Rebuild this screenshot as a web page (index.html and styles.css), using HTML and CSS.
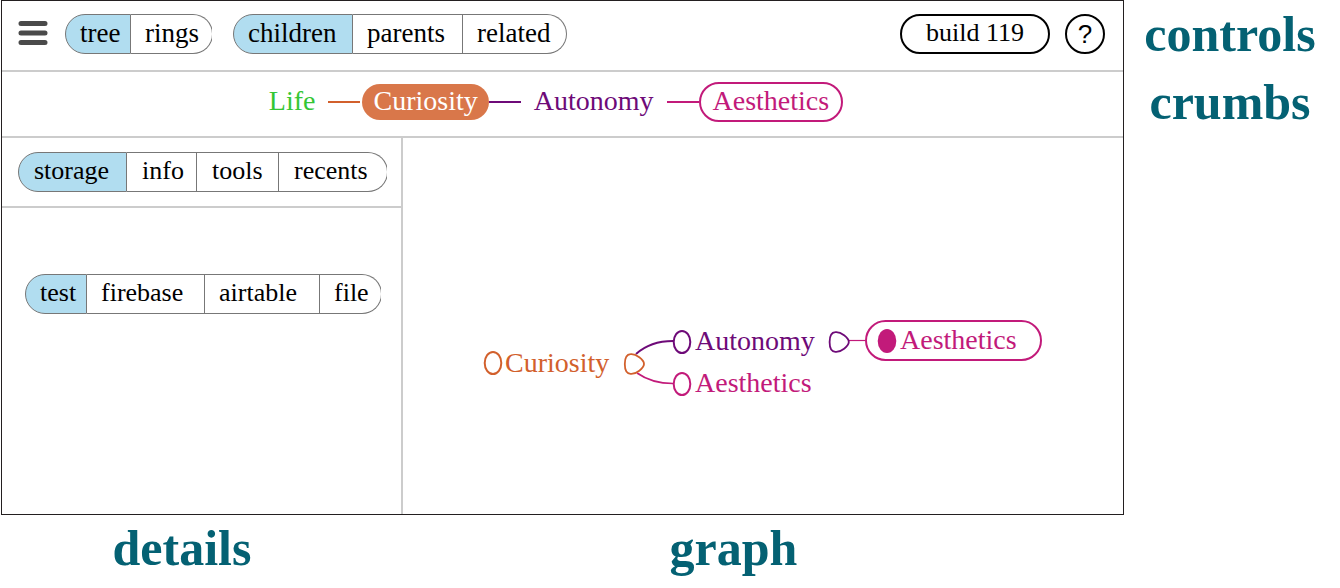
FILE: index.html
```
<!DOCTYPE html>
<html lang="en">
<head>
<meta charset="utf-8">
<title>Layout regions</title>
<link rel="stylesheet" href="styles.css">
</head>
<body>
<div class="page">
  <main class="frame">
    <header class="controls">
      <button class="menu" aria-label="Menu">
        <svg width="30" height="26" viewBox="0 0 30 26" stroke="#4a4a4a" stroke-width="5" stroke-linecap="round"><path d="M3 2.500H27M3 12H27M3 21.500H27"/></svg>
      </button>
      <div class="segments segments-view clipped" role="group" aria-label="View">
        <button class="segment selected" aria-pressed="true">tree</button>
        <button class="segment" aria-pressed="false">rings</button>
      </div>
      <div class="segments segments-relation" role="group" aria-label="Relation">
        <button class="segment selected" aria-pressed="true">children</button>
        <button class="segment" aria-pressed="false">parents</button>
        <button class="segment" aria-pressed="false">related</button>
      </div>
      <div class="actions">
        <button class="build">build 119</button>
        <button class="help" aria-label="Help">?</button>
      </div>
    </header>
    <nav class="crumbs" aria-label="Breadcrumbs">
      <button class="crumb green">Life</button>
      <span class="link orange"></span>
      <button class="crumb crumb-filled">Curiosity</button>
      <span class="link link-joined purple"></span>
      <button class="crumb purple">Autonomy</button>
      <span class="link pink"></span>
      <button class="crumb crumb-outlined pink">Aesthetics</button>
    </nav>
    <div class="body">
      <aside class="details">
        <div class="details-tabs">
          <div class="segments segments-details clipped" role="group" aria-label="Details">
            <button class="segment selected" aria-pressed="true">storage</button>
            <button class="segment" aria-pressed="false">info</button>
            <button class="segment" aria-pressed="false">tools</button>
            <button class="segment" aria-pressed="false">recents</button>
          </div>
        </div>
        <div class="details-content">
          <div class="segments segments-storage clipped" role="group" aria-label="Storage">
            <button class="segment selected" aria-pressed="true">test</button>
            <button class="segment" aria-pressed="false">firebase</button>
            <button class="segment" aria-pressed="false">airtable</button>
            <button class="segment" aria-pressed="false">file</button>
          </div>
        </div>
      </aside>
      <section class="graph" aria-label="Graph">
        <svg class="edges" width="660" height="280" viewBox="0 0 660 280" fill="none" stroke-width="2">
          <path stroke="#6e0a78" d="M233 216C243 207 254 203 270 203"/>
          <path stroke="#c21a7a" stroke-width="1.7" d="M234 235C244 242 256 245.500 270 245.500"/>
          <path stroke="#c21a7a" stroke-width="1.200" d="M446 202.500H462"/>
          <ellipse stroke="#d2602c" cx="90" cy="225" rx="8.300" ry="11"/>
          <path stroke="#d2602c" stroke-width="1.800" d="M227.500 216.200C233 215.500 241 222 241 226C241 230 233 236.500 227.500 235.800C223 235.500 221.800 231 221.800 226C221.800 221 223 216.500 227.500 216.200Z"/>
          <ellipse stroke="#6e0a78" cx="279" cy="204" rx="8.300" ry="11"/>
          <ellipse stroke="#c21a7a" cx="279" cy="246" rx="8.300" ry="11"/>
          <path stroke="#6e0a78" stroke-width="1.800" d="M432.300 194.200C437.800 193.500 445.800 200 445.800 204C445.800 208 437.800 214.500 432.300 213.800C427.800 213.500 426.600 209 426.600 204C426.600 199 427.800 194.500 432.300 194.200Z"/>
          <rect stroke="#c21a7a" x="463" y="183" width="175" height="39" rx="19.500"/>
          <ellipse fill="#c21a7a" cx="484" cy="203" rx="9.300" ry="12"/>
        </svg>
        <button class="node node-curiosity orange">Curiosity</button>
        <button class="node node-autonomy purple">Autonomy</button>
        <button class="node node-aesthetics pink">Aesthetics</button>
        <button class="node node-current pink">Aesthetics</button>
      </section>
    </div>
  </main>
  <div class="side-labels">
    <div>controls</div>
    <div>crumbs</div>
  </div>
  <div class="bottom-labels">
    <div class="label-details">details</div>
    <div class="label-graph">graph</div>
  </div>
</div>
</body>
</html>
```

FILE: styles.css
```
* {
  box-sizing: border-box;
}

body {
  margin: 0;
  background: #fff;
  color: #000;
  font-family: "Liberation Serif", "Times New Roman", serif;
}

button {
  margin: 0;
  padding: 0;
  border: 0;
  background: none;
  color: inherit;
  font: inherit;
  white-space: nowrap;
  cursor: pointer;
}

.page {
  display: grid;
  grid-template-columns: minmax(0, 1fr) 216px;
  grid-template-rows: 1fr auto;
  min-height: 100vh;
  padding-left: 1px;
  padding-bottom: 7px;
}

.frame {
  display: flex;
  flex-direction: column;
  border: 1px solid #231f20;
}

.controls {
  display: flex;
  align-items: center;
  padding: 13px 18px 16px 16px;
  border-bottom: 2px solid #ccc;
  font-size: 27px;
}

.menu {
  display: flex;
  margin-right: 17px;
}

.segments {
  display: grid;
  width: max-content;
  height: 40px;
  line-height: 32px;
}

.segments-view {
  grid-template-columns: 66px 82px;
  margin-right: 20px;
}

.segments-relation {
  grid-template-columns: 120px 110px 104px;
}

.segments-details {
  grid-template-columns: 109px 70px 82px 109px;
}

.segments-storage {
  grid-template-columns: 62px 118px 115px 62px;
}

.clipped {
  clip-path: inset(0 1px 0 0);
}

.segment {
  padding: 0 0 2px 14px;
  border: 1px solid #777;
  border-left-width: 0;
  text-align: left;
}

.segment:first-child {
  border-left-width: 1px;
  border-radius: 20px 0 0 20px;
}

.segment:last-child {
  border-radius: 0 20px 20px 0;
}

.segments-details .segment {
  padding-left: 15px;
}

.selected {
  background: #b1ddf0;
}

.actions {
  display: flex;
  gap: 15px;
  margin-left: auto;
  font-size: 26px;
}

.build {
  width: 150px;
  height: 40px;
  padding-bottom: 2px;
  border: 2px solid #000;
  border-radius: 20px;
}

.help {
  width: 40px;
  height: 40px;
  border: 2px solid #000;
  border-radius: 50%;
  font-family: "Liberation Sans", Arial, sans-serif;
}

.crumbs {
  display: flex;
  align-items: center;
  justify-content: center;
  padding: 10px 26px 14px 0;
  border-bottom: 2px solid #ccc;
  font-size: 28px;
}

.crumb {
  height: 40px;
  padding: 0 11px 2px;
  border: 2px solid transparent;
  border-radius: 20px;
  line-height: 32px;
}

.crumb-filled {
  background: #d9774a;
  background-clip: padding-box;
  color: #fff;
}

.crumb-outlined {
  padding-right: 12px;
  padding-left: 12px;
  border-color: currentColor;
}

.link {
  width: 32px;
  height: 2px;
  background: currentColor;
}

.link-joined {
  margin-left: -2px;
}

.green {
  color: #34c634;
}

.orange {
  color: #d2602c;
}

.purple {
  color: #6e0a78;
}

.pink {
  color: #c21a7a;
}

.body {
  display: grid;
  grid-template-columns: 401px minmax(0, 1fr);
  flex: 1;
}

.details {
  border-right: 2px solid #ccc;
  font-size: 26px;
}

.details-tabs {
  padding: 14px 16px;
  border-bottom: 2px solid #ccc;
}

.details-content {
  padding: 66px 23px;
}

.graph {
  position: relative;
  min-height: 376px;
  font-size: 28px;
  line-height: 32px;
}

.edges {
  position: absolute;
  left: 0;
  top: 0;
}

.node {
  position: absolute;
}

.node-curiosity {
  left: 102px;
  top: 209px;
}

.node-autonomy {
  left: 292px;
  top: 187px;
}

.node-aesthetics {
  left: 292px;
  top: 229px;
}

.node-current {
  left: 497px;
  top: 186px;
}

.side-labels,
.bottom-labels {
  color: #046173;
  font-size: 50px;
  font-weight: bold;
  text-align: center;
}

.side-labels {
  padding-right: 4px;
  line-height: 68px;
}

.bottom-labels {
  display: grid;
  grid-template-columns: 402px minmax(0, 1fr);
  line-height: 66px;
}

.label-details {
  padding-right: 40px;
}

.label-graph {
  padding-right: 60px;
}
```
